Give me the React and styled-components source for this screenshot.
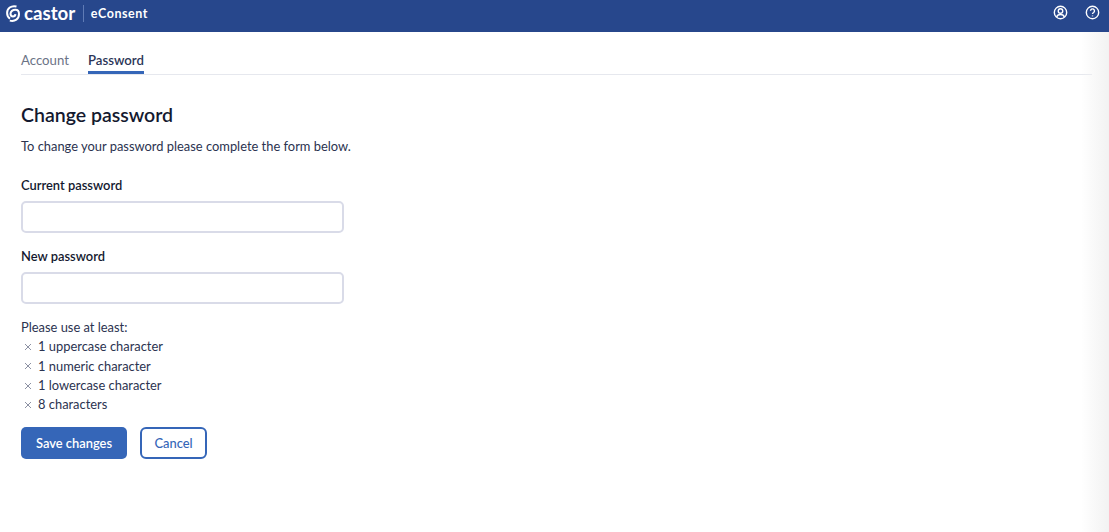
import React from 'react';
import styled, { createGlobalStyle } from 'styled-components';

const rules = ['1 uppercase character', '1 numeric character', '1 lowercase character', '8 characters'];

const App = () => {
  return (
    <Page>
      <GlobalStyle />
      <Header>
        <Brand>
          <LogoMark viewBox="0 0 14 17">
            <path d="M10.500 1.500C5 .2 1.100 3.400 1.100 8c0 2.500 1 4.500 2.900 5.700" />
            <path d="M3.800 15.600C9 16.800 13 14 13 9c0-2.400-1.500-4.200-3.600-4.200-2.700 0-4.900 1.600-4.900 4 0 1.500 1.200 2.600 2.500 2.600s2.300-1 2.400-2.300" />
          </LogoMark>
          <BrandName>castor</BrandName>
          <BrandDivider />
          <ProductName>eConsent</ProductName>
        </Brand>
        <HeaderIcons>
          <HeaderIcon viewBox="0 0 16 16">
            <circle cx="8" cy="8" r="6.6" />
            <circle cx="8" cy="6.4" r="2.4" />
            <path d="M3.900 12.800c.5-2 2-2.600 4.100-2.600s3.600.6 4.100 2.600" />
          </HeaderIcon>
          <HeaderIcon viewBox="0 0 16 16">
            <circle cx="8" cy="8" r="6.6" />
            <path d="M5.900 6.200a2.100 2.100 0 1 1 3.300 1.800c-.8.5-1.200.9-1.200 1.700" />
            <path d="M8 11.200v.9" />
          </HeaderIcon>
        </HeaderIcons>
      </Header>
      <Main>
        <Tabs>
          <Tab>Account</Tab>
          <Tab $active>Password</Tab>
        </Tabs>
        <Title>Change password</Title>
        <Intro>To change your password please complete the form below.</Intro>
        <Field>
          <Label>Current password</Label>
          <Input type="password" />
        </Field>
        <Field>
          <Label>New password</Label>
          <Input type="password" />
        </Field>
        <Rules>
          <RulesTitle>Please use at least:</RulesTitle>
          {rules.map((rule) => (
            <Rule key={rule}>
              <Cross viewBox="0 0 8 8">
                <path d="M1 1l6 6M7 1L1 7" />
              </Cross>
              {rule}
            </Rule>
          ))}
        </Rules>
        <Actions>
          <SaveButton>Save changes</SaveButton>
          <CancelButton>Cancel</CancelButton>
        </Actions>
      </Main>
      <EdgeShade />
    </Page>
  );
};

const GlobalStyle = createGlobalStyle`
  body {
    margin: 0;
    background: #fff;
    font-family: Lato, "Noto Sans", sans-serif;
  }
`;

const Page = styled.div`
  position: relative;
  height: 532px;
  overflow: hidden;
  background: #fff;
  color: #1d2540;
`;

const Header = styled.header`
  display: flex;
  justify-content: space-between;
  align-items: center;
  height: 32px;
  padding: 0 9px 0 6px;
  background: #27478c;
  color: #fff;
`;

const Brand = styled.div`
  display: flex;
  align-items: center;
  height: 26px;
  margin-top: -6px;
`;

const LogoMark = styled.svg`
  width: 14px;
  height: 17px;
  fill: none;
  stroke: #fff;
  stroke-width: 2;
  margin-right: 4px;
`;

const BrandName = styled.span`
  font-size: 18.7px;
  font-weight: 700;
`;

const BrandDivider = styled.span`
  width: 1px;
  height: 17px;
  margin: 0 7px 0 7.5px;
  background: #5f7bb5;
`;

const ProductName = styled.span`
  font-size: 12.5px;
  font-weight: 700;
  letter-spacing: 0.55px;
`;

const HeaderIcons = styled.div`
  display: flex;
  align-items: center;
  gap: 17px;
  margin-top: -7px;
`;

const HeaderIcon = styled.svg`
  width: 15px;
  height: 15px;
  fill: none;
  stroke: #fff;
  stroke-width: 1.5;
`;

const Main = styled.main`
  padding: 0 17px 0 21px;
`;

const Tabs = styled.nav`
  display: flex;
  gap: 19px;
  height: 43px;
  box-sizing: border-box;
  padding-top: 19px;
  border-bottom: 1px solid #e6e8ee;
`;

const Tab = styled.span`
  height: 23px;
  font-size: 13.2px;
  line-height: 18px;
  box-sizing: border-box;
  color: ${(props) => (props.$active ? '#2b3557' : '#6c7386')};
  font-weight: ${(props) => (props.$active ? 600 : 400)};
  border-bottom: ${(props) => (props.$active ? '3px solid #3566b8' : '3px solid transparent')};
`;

const Title = styled.h1`
  margin: 26px 0 0;
  font-size: 19.5px;
  line-height: 28px;
  font-weight: 600;
  color: #14192f;
`;

const Intro = styled.p`
  margin: 8px 0 0;
  font-size: 12.9px;
  line-height: 18px;
  color: #2b3350;
`;

const Field = styled.div`
  display: flex;
  flex-direction: column;
  margin-bottom: 14px;

  &:first-of-type {
    margin-top: 21px;
  }
`;

const Label = styled.label`
  font-size: 12.9px;
  line-height: 18px;
  font-weight: 600;
  color: #14192f;
  margin-bottom: 7px;
`;

const Input = styled.input`
  width: 323px;
  height: 32px;
  box-sizing: border-box;
  border: 2px solid #d9dbe8;
  border-radius: 5px;
  background: #fff;
`;

const Rules = styled.div`
  margin-top: 13px;
  font-size: 12.9px;
  line-height: 19.3px;
  color: #2b3350;
`;

const RulesTitle = styled.div``;

const Rule = styled.div`
  display: flex;
  align-items: center;
`;

const Cross = styled.svg`
  width: 8px;
  height: 8px;
  margin: 0 6px 0 3px;
  fill: none;
  stroke: #8c91a3;
  stroke-width: 1;
`;

const Actions = styled.div`
  display: flex;
  gap: 13px;
  margin-top: 13px;
`;

const SaveButton = styled.button`
  width: 106px;
  height: 32px;
  border: 0;
  border-radius: 5px;
  background: #3566b8;
  color: #fff;
  font-family: inherit;
  font-size: 12.9px;
  font-weight: 600;
`;

const CancelButton = styled.button`
  width: 67px;
  height: 32px;
  border: 2px solid #3566b8;
  border-radius: 6px;
  background: #fff;
  color: #3566b8;
  font-family: inherit;
  font-size: 12.9px;
  font-weight: 500;
`;

const EdgeShade = styled.div`
  position: absolute;
  top: 32px;
  right: 0;
  bottom: 0;
  width: 28px;
  background: linear-gradient(to right, rgba(240, 240, 240, 0), #f2f2f2);
`;

export default App;
